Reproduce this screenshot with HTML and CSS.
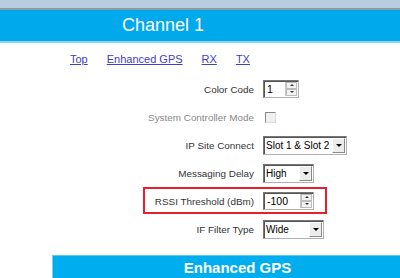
FILE: index.html
```html
<!DOCTYPE html>
<html>
<head>
<meta charset="utf-8">
<link rel="stylesheet" href="styles.css">
</head>
<body>
<div class="page">
  <div class="topstrip"></div>
  <div class="header"><span class="title">Channel 1</span></div>
  <nav class="nav">
    <a href="#">Top</a>
    <a href="#">Enhanced GPS</a>
    <a href="#">RX</a>
    <a href="#">TX</a>
  </nav>
  <div class="form">
    <div class="row">
      <div class="label">Color Code</div>
      <div class="ctrl spin w35"><span class="val">1</span><span class="spinbtns"><span class="up"></span><span class="dn"></span></span></div>
    </div>
    <div class="row">
      <div class="label disabled">System Controller Mode</div>
      <div class="check"></div>
    </div>
    <div class="row">
      <div class="label">IP Site Connect</div>
      <div class="ctrl sel w84"><span class="val">Slot 1 &amp; Slot 2</span><span class="drop"><span class="tri"></span></span></div>
    </div>
    <div class="row">
      <div class="label">Messaging Delay</div>
      <div class="ctrl sel w50"><span class="val">High</span><span class="drop"><span class="tri"></span></span></div>
    </div>
    <div class="row hl">
      <div class="label">RSSI Threshold (dBm)</div>
      <div class="ctrl spin w50"><span class="val">-100</span><span class="spinbtns"><span class="up"></span><span class="dn"></span></span></div>
    </div>
    <div class="row">
      <div class="label">IF Filter Type</div>
      <div class="ctrl sel w61"><span class="val">Wide</span><span class="drop"><span class="tri"></span></span></div>
    </div>
  </div>
  <div class="section"><span>Enhanced GPS</span></div>
</div>
</body>
</html>
```

FILE: styles.css
```css
html, body {
  margin: 0;
  padding: 0;
  background: #fff;
  overflow: hidden;
}
.page {
  width: 400px;
  height: 278px;
  overflow: hidden;
  font-family: "Liberation Sans", Arial, sans-serif;
}
.topstrip {
  height: 8px;
  background: #b9cce0;
  border-bottom: 2px solid #8d9aa5;
}
.header {
  height: 31px;
  background: #00a9ec;
  border-bottom: 2px solid #86d8f7;
  padding-left: 122px;
  line-height: 31px;
}
.title {
  color: #fff;
  font-size: 18px;
}
.nav {
  height: 31px;
  display: flex;
  align-items: center;
  gap: 19px;
  padding-left: 70px;
  font-size: 11px;
}
.nav a {
  color: #4040c8;
  text-decoration: underline;
}
.form {
  display: flex;
  flex-direction: column;
  padding-top: 1px;
}
.row {
  height: 28px;
  display: flex;
  align-items: center;
  gap: 9px;
  position: relative;
}
.row.hl::after {
  content: "";
  position: absolute;
  left: 143px;
  width: 180px;
  top: 0;
  height: 23px;
  border: 2px solid #e4202c;
}
.label {
  width: 254px;
  text-align: right;
  font-size: 9.9px;
  color: #333;
}
.label.disabled {
  color: #888;
}
.ctrl {
  height: 16px;
  box-sizing: content-box;
  border-top: 1px solid #777;
  border-left: 1px solid #777;
  border-right: 1px solid #b0b0b0;
  border-bottom: 1px solid #b0b0b0;
  box-shadow: inset 1px 1px 0 #555;
  background: #fff;
  display: flex;
  align-items: center;
  font-size: 10.5px;
  color: #000;
}
.sel { height: 17px; font-size: 10px; }
.w35 { width: 34px; }
.w50 { width: 49px; }
.w61 { width: 59px; }
.w84 { width: 82px; }
.val {
  flex: 1;
  padding-left: 3px;
  white-space: nowrap;
  overflow: hidden;
}
.sel .val { padding-left: 2px; }
.spinbtns {
  width: 11px;
  height: 14px;
  margin-right: 1px;
  display: flex;
  flex-direction: column;
  border-left: 1px solid #c8c8c8;
}
.spinbtns span {
  flex: 1;
  background: #f2f2f2;
  border: 1px solid #bcbcbc;
  position: relative;
}
.spinbtns .up::after,
.spinbtns .dn::after {
  content: "";
  position: absolute;
  left: 3px;
  top: 1px;
  border-left: 2px solid transparent;
  border-right: 2px solid transparent;
}
.spinbtns .up::after { border-bottom: 2px solid #333; }
.spinbtns .dn::after { border-top: 2px solid #333; }
.drop {
  width: 13px;
  height: 15px;
  margin-right: 1px;
  flex-shrink: 0;
  background: #ececec;
  border-top: 1px solid #fff;
  border-left: 1px solid #fff;
  border-right: 1px solid #8a8a8a;
  border-bottom: 1px solid #8a8a8a;
  box-sizing: border-box;
  display: flex;
  align-items: center;
  justify-content: center;
}
.tri {
  width: 0;
  height: 0;
  border-left: 3px solid transparent;
  border-right: 3px solid transparent;
  border-top: 3px solid #000;
}
.check {
  width: 9px;
  height: 9px;
  margin-left: 2px;
  background: #f0f0f0;
  border-top: 1px solid #8a8a8a;
  border-left: 1px solid #8a8a8a;
  border-right: 1px solid #dcdcdc;
  border-bottom: 1px solid #dcdcdc;
}
.section {
  margin-top: 12px;
  margin-left: 52px;
  width: 370px;
  height: 30px;
  background: #00aeef;
  border-left: 1px solid #7fd2f5;
  border-top: 1px solid #5fc9f4;
  text-align: center;
  color: #fff;
  font-weight: bold;
  font-size: 15px;
  padding-top: 3px;
  box-sizing: border-box;
}
```
